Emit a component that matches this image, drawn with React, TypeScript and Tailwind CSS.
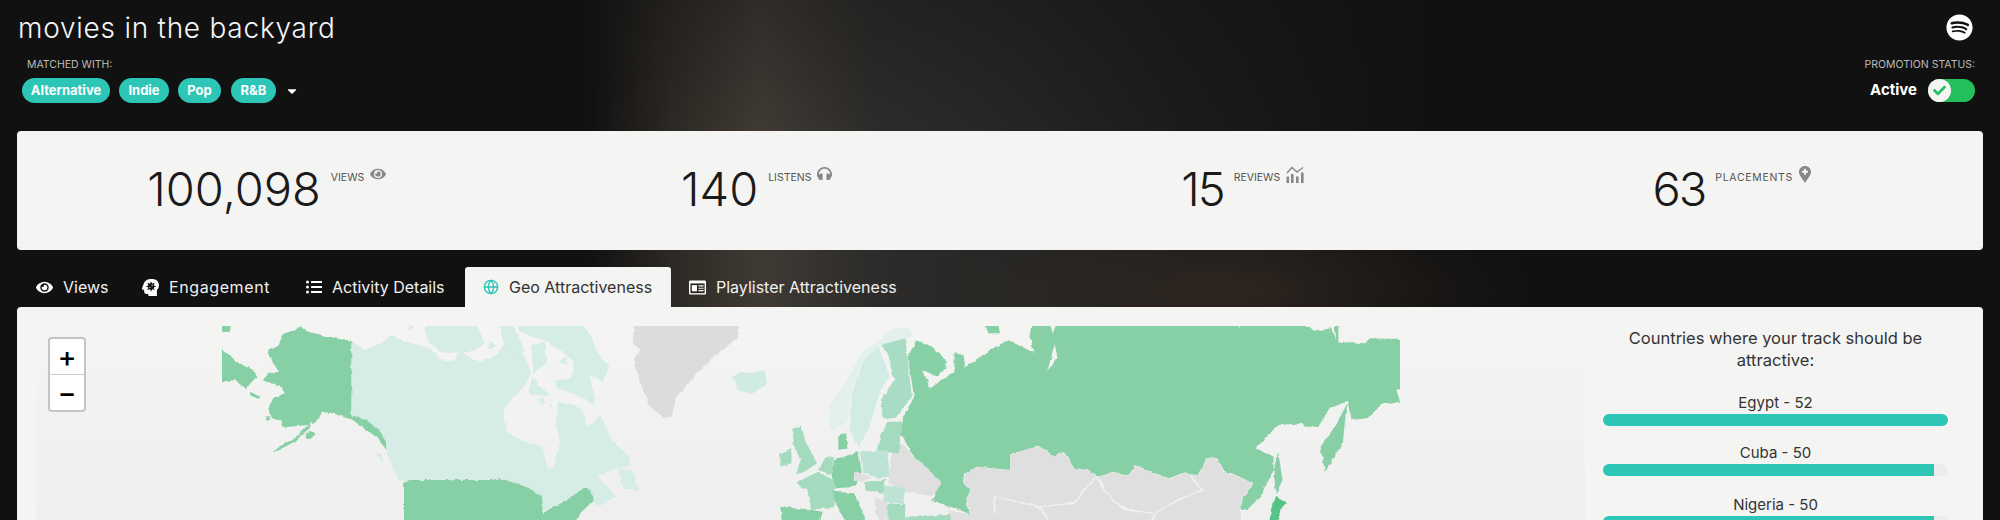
import React from "react";
import { FaEye, FaHeadphones, FaSpotify, FaCheck, FaListUl, FaHeadSideVirus, FaCaretDown } from "react-icons/fa";
import { Globe } from "lucide-react";

const font = { fontFamily: "Inter, 'Open Sans', sans-serif" };

function ReviewIcon() {
  return (
    <svg viewBox="0 0 18 17" className="w-[18px] h-[17px]" fill="#888">
      <rect x="0.5" y="10.5" width="2.6" height="6.5" />
      <rect x="5" y="8" width="2.6" height="9" />
      <rect x="10" y="10.5" width="2.6" height="6.5" />
      <rect x="15" y="6.5" width="2.6" height="10.5" />
      <path d="M1 7 L6 1.5 L11 6 L17 1.5" fill="none" stroke="#888" strokeWidth="1.4" />
    </svg>
  );
}

function PinIcon() {
  return (
    <svg viewBox="0 0 12 17" className="w-[12px] h-[17px]">
      <path d="M6 0 C2.6 0 0 2.6 0 5.9 C0 9.5 3.6 12.5 6 17 C8.4 12.5 12 9.5 12 5.9 C12 2.6 9.4 0 6 0 Z" fill="#888" />
      <path d="M6 2.8 V8.8 M3 5.8 H9" stroke="#f4f4f2" strokeWidth="1.9" />
    </svg>
  );
}

function CardIcon() {
  return (
    <svg viewBox="0 0 18 15" className="w-[17px] h-[15px]">
      <rect x="0" y="0" width="18" height="15" rx="1.5" fill="#fff" />
      <rect x="1.5" y="3.2" width="15" height="10.3" fill="#2a2622" />
      <rect x="3" y="5" width="5.5" height="6.5" fill="#fff" />
      <path d="M10 5.8 H15.5 M10 8.3 H15.5 M10 10.8 H15.5" stroke="#fff" strokeWidth="1.2" />
    </svg>
  );
}

function Stat({ value, label, icon, c, n = "", l = "", i = "ml-[6px]" }: { value: string; label: string; icon: React.ReactNode; c: string; n?: string; l?: string; i?: string }) {
  return (
    <div className={`flex justify-center items-start pt-[28px] ${c}`}>
      <span className={`text-[47px] leading-[60px] font-light text-[#1a1a1a] ${n}`}>{value}</span>
      <span className={`text-[10.5px] leading-[14px] text-[#555] ml-[10px] mt-[12px] ${l}`}>{label}</span>
      <span className={`mt-[7px] text-[#888] ${i}`}>{icon}</span>
    </div>
  );
}

const tabs = [
  { name: "Views", icon: <FaEye size={17} />, w: "w-[107px] pl-[19px]" },
  { name: "Engagement", icon: <FaHeadSideVirus size={17} className="-scale-x-100" />, w: "w-[164px] pl-[18px] tracking-[0.6px]" },
  { name: "Activity Details", icon: <FaListUl size={16} />, w: "w-[177px] pl-[18px]" },
  { name: "Geo Attractiveness", icon: <Globe size={16} strokeWidth={2} />, w: "w-[206px] pl-[18px]", active: true },
  { name: "Playlister Attractiveness", icon: <CardIcon />, w: "w-[246px] pl-[18px]" },
];

function Bar({ label, pct, m }: { label: string; pct: string; m: string }) {
  return (
    <div className={m}>
      <div className="text-[15px] leading-[22px] text-center text-[#333]">{label}</div>
      <div className="h-[12px] rounded-full bg-[#ececec] overflow-hidden">
        <div className={`h-full bg-[#2dc5b6] ${pct}`} />
      </div>
    </div>
  );
}

const G1 = "#87d0a5";
const G2 = "#a4dabd";
const G3 = "#bce3d3";
const L1 = "#d6ece6";
const GR = "#dfdfdf";

function WorldMap() {
  return (
    <svg viewBox="0 0 1178 194" className="w-[1178px] h-[194px] block" preserveAspectRatio="none">
      <defs>
        <filter id="coast" x="-2%" y="-5%" width="104%" height="110%">
          <feTurbulence type="fractalNoise" baseFrequency="0.18" numOctaves="2" seed="4" />
          <feDisplacementMap in="SourceGraphic" scale="3.5" xChannelSelector="R" yChannelSelector="G" />
        </filter>
      </defs>
      <g transform="translate(-222,-326)" filter="url(#coast)" strokeLinejoin="round">
        <g transform="translate(0,300) scale(0.4464,0.3333)">
          <path fill={L1} d="M787,125 L820,150 L850,130 L880,105 L905,125 L940,135 L975,155 L985,180 L1015,185 L1030,155 L1075,185 L1110,165 L1130,130 L1160,140 L1175,170 L1190,215 L1180,250 L1155,285 L1130,320 L1128,355 L1135,395 L1165,420 L1215,440 L1222,480 L1228,505 L1240,505 L1245,470 L1255,425 L1245,370 L1250,305 L1285,315 L1305,330 L1315,385 L1345,345 L1370,420 L1410,470 L1412,495 L1360,515 L1320,545 L1300,570 L1270,600 L1215,635 L1215,590 L1180,560 L1120,535 L1100,540 L915,540 L880,510 L865,450 L865,425 L845,385 L820,360 L787,345 Z" />
          <path fill={L1} d="M1165,50 L1295,50 L1325,110 L1335,150 L1365,200 L1350,245 L1320,225 L1335,315 L1290,285 L1250,265 L1245,240 L1280,235 L1285,180 L1225,125 L1165,95 Z M950,85 L985,50 L1060,50 L1085,130 L1050,160 L985,155 L960,125 Z M910,50 L935,50 L920,95 Z M1115,50 L1140,50 L1175,150 L1160,170 L1125,120 Z M1190,135 L1220,125 L1225,190 L1195,220 Z M1190,230 L1230,285 L1185,285 Z M1205,295 L1220,295 L1215,315 Z M1232,310 L1240,318 L1232,322 Z M1385,505 L1415,510 L1433,575 L1395,565 Z M1310,550 L1340,530 L1380,590 L1335,620 L1330,590 Z M842,458 L855,460 L858,490 Z M880,515 L905,525 L918,550 L895,535 Z M1095,120 L1115,140 L1095,150 Z M1250,185 L1270,170 L1268,195 Z" />
          <path fill={G1} d="M675,78 L690,95 L720,105 L787,125 L787,345 L820,360 L845,385 L865,425 L865,450 L845,410 L815,385 L790,360 L745,340 L720,335 L705,372 L695,365 L693,385 L660,425 L612,458 L625,440 L660,415 L690,375 L650,380 L630,380 L632,362 L610,355 L600,325 L612,295 L638,280 L630,262 L590,240 L600,222 L625,215 L612,190 L598,150 L625,135 L632,102 L660,90 Z M470,130 L500,150 L540,195 L560,200 L577,228 L550,265 L525,240 L470,250 Z M560,275 L583,290 L580,297 L560,285 Z M592,350 L605,348 L607,360 L598,362 Z M682,403 L695,392 L707,402 L695,417 L685,415 Z M470,50 L520,50 L515,95 L470,98 Z" />
          <path fill={G1} d="M905,548 L915,540 L1100,540 L1120,535 L1180,560 L1215,590 L1215,640 L1270,600 L1310,562 L1325,570 L1330,600 L1300,640 L1280,700 L905,700 Z" />
          <path fill="#dcdcdc" d="M1420,50 L1658,50 L1653,115 L1608,160 L1568,210 L1530,270 L1515,290 L1505,350 L1490,355 L1455,320 L1430,230 L1420,180 L1435,150 L1418,130 Z" />
        </g>
        <g transform="translate(700,300) scale(0.4464,0.3333)">
          <path fill="#d0ebe3" d="M72,230 L90,215 L115,220 L145,210 L150,250 L115,282 L85,270 Z" />
          <path fill="#e2f1ed" d="M430,85 L470,85 L478,105 L440,125 L400,140 L360,200 L340,270 L330,365 L300,390 L290,380 L288,320 L330,240 L355,170 L400,120 Z" />
          <path fill="#d2ece5" d="M400,140 L415,190 L425,230 L405,270 L385,350 L380,380 L355,440 L335,395 L340,280 L370,170 Z" />
          <path fill="#a8dcc4" d="M405,135 L460,115 L465,180 L475,290 L440,350 L410,355 L405,300 L435,240 L420,160 Z" />
          <path fill={GR} stroke="#f2f2f2" strokeWidth="3" d="M595,520 L620,500 L695,510 L695,462 L760,438 L795,470 L815,455 L840,505 L870,510 L890,530 L925,515 L960,525 L975,495 L1020,520 L1050,535 L1080,520 L1115,525 L1135,475 L1155,470 L1180,520 L1200,525 L1240,550 L1215,600 L1212,700 L555,700 L555,630 L605,640 L595,610 L605,570 L590,550 Z" />
          <path fill="none" stroke="#f2f2f2" strokeWidth="4" d="M890,530 L900,560 L925,600 L955,630 L1020,640 L1070,600 L1125,570 L1100,530 M890,530 L860,570 L840,610 L760,620 L660,590 L660,640 M760,620 L790,680 M1020,640 L1010,680" />
          <path fill={GR} stroke="#f2f2f2" strokeWidth="3" d="M455,430 L480,470 L505,500 L545,535 L535,570 L520,590 L470,580 L420,550 L425,500 L430,440 Z" />
          <path fill={G1} d="M805,50 L1620,50 L1620,250 L1560,270 L1568,305 L1530,310 L1495,355 L1460,360 L1450,305 L1410,325 L1385,380 L1355,380 L1350,370 L1295,375 L1245,445 L1285,470 L1285,510 L1255,590 L1225,630 L1212,625 L1215,600 L1240,550 L1200,525 L1180,520 L1155,470 L1135,475 L1115,525 L1080,520 L1050,535 L1020,520 L975,495 L960,525 L925,515 L890,530 L870,510 L840,505 L815,455 L795,470 L760,438 L695,462 L695,510 L620,500 L595,520 L590,550 L605,570 L595,610 L605,642 L520,600 L540,545 L505,500 L480,470 L450,400 L455,350 L480,290 L465,170 L485,120 L520,140 L550,180 L550,205 L530,230 L500,210 L515,265 L570,215 L570,160 L590,165 L595,200 L650,150 L690,120 L750,160 L738,110 L745,50 L780,50 L795,130 L778,215 L800,170 L790,100 Z" />
          <path fill="#f3f3f2" d="M1200,50 L1215,50 L1210,90 Z M1290,50 L1420,50 L1425,120 L1415,85 L1375,92 L1365,80 Z M1430,50 L1620,50 L1620,118 L1500,115 L1490,130 L1430,125 Z" />
          <path fill={G1} d="M635,50 L665,50 L672,100 L645,100 Z M1450,310 L1445,360 L1440,430 L1400,515 L1390,440 L1425,375 Z M1295,455 L1305,540 L1290,585 L1285,510 Z" />
          <path fill="#57c388" d="M1290,590 L1315,610 L1300,630 L1290,700 L1272,700 L1280,620 Z" />
          <path fill={G2} d="M210,385 L228,380 L235,420 L262,490 L240,510 L215,525 L225,480 L207,430 Z M180,460 L205,445 L205,490 L180,500 Z M265,515 L305,545 L300,620 L250,630 L240,570 L215,548 Z M420,365 L455,365 L450,400 L445,460 L395,458 L405,400 Z M280,475 L300,470 L295,525 L265,510 Z" />
          <path fill={G3} d="M358,455 L420,450 L425,530 L395,535 L365,515 Z M410,555 L460,565 L455,610 L410,610 Z" />
          <path fill={G1} d="M300,480 L355,455 L362,515 L348,560 L305,565 L295,530 Z M310,405 L328,400 L330,445 L310,450 Z M180,620 L240,628 L275,635 L260,700 L185,700 Z M300,575 L345,580 L385,700 L340,700 L300,600 Z" />
          <path fill={G2} d="M370,545 L415,540 L410,580 L370,570 Z M420,612 L460,612 L458,700 L420,700 Z M460,650 L560,645 L570,700 L460,700 Z" />
          <path fill={GR} d="M345,515 L385,530 L365,545 L345,540 Z M390,590 L420,610 L415,700 L395,640 Z" />
        </g>
      </g>
    </svg>
  );
}

export default function App() {
  return (
    <div
      style={font}
      className="w-full h-[520px] overflow-hidden bg-[#111111] bg-[linear-gradient(180deg,rgba(17,17,17,0.35)_0px,rgba(17,17,17,0)_130px),radial-gradient(ellipse_300px_90px_at_1230px_290px,rgba(70,52,40,0.45)_0%,rgba(17,17,17,0)_100%),linear-gradient(90deg,#111111_0px,#111111_590px,#2c2823_670px,#403a34_760px,#2d2c2a_870px,#262625_1000px,#1b1b1b_1180px,#111111_1420px)]"
    >
      <header className="h-[131px] px-[18px] flex flex-col">
        <div className="flex justify-between items-start">
          <h1 className="text-[28px] leading-[34px] mt-[11px] text-[#f5f5f5] font-light tracking-[0.75px]">movies in the backyard</h1>
          <FaSpotify size={27} className="text-white mt-[14px] mr-[9px]" />
        </div>
        <div className="flex justify-between items-start mt-[13px]">
          <div>
            <div className="ml-[9px] text-[10.5px] leading-[14px] text-[#bbbbbb]">MATCHED WITH:</div>
            <div className="flex items-center mt-[6px] ml-[4px]">
              {[["Alternative", "w-[88px] mr-[9px]"], ["Indie", "w-[50px] mr-[9px]"], ["Pop", "w-[43px] mr-[10px]"], ["R&B", "w-[45px]"]].map(([t, c]) => (
                <span key={t} className={`h-[25px] rounded-full bg-[#2dc5b6] text-white font-bold text-[13px] flex items-center justify-center ${c}`}>{t}</span>
              ))}
              <FaCaretDown size={14} className="text-white ml-[9px]" />
            </div>
          </div>
          <div className="flex flex-col items-end mr-[7px]">
            <div className="text-[10.5px] leading-[14px] text-[#bbbbbb]">PROMOTION STATUS:</div>
            <div className="flex items-center mt-[7px]">
              <span className="text-white font-bold text-[15px] mr-[11px]">Active</span>
              <span className="w-[47px] h-[23px] rounded-full bg-[#22bf5b] flex items-center">
                <span className="w-[23px] h-[23px] rounded-full bg-[#f4f4f2] flex items-center justify-center">
                  <FaCheck size={13} className="text-[#22bf5b]" />
                </span>
              </span>
            </div>
          </div>
        </div>
      </header>

      <section className="mx-[17px] h-[119px] rounded-[4px] bg-[#f4f4f2] grid grid-cols-4">
        <Stat value="100,098" label="VIEWS" icon={<FaEye size={16} />} c="pl-[8px]" />
        <Stat value="140" label="LISTENS" icon={<FaHeadphones size={15} />} c="pl-[5px]" />
        <Stat value="15" label="REVIEWS" icon={<ReviewIcon />} c="pr-[6px]" n="tracking-[-2px]" />
        <Stat value="63" label="PLACEMENTS" icon={<PinIcon />} c="pr-[11px]" n="tracking-[-2px]" l="tracking-[0.7px]" />
      </section>

      <nav className="flex ml-[17px] mt-[17px] h-[40px]">
        {tabs.map((t) => (
          <div
            key={t.name}
            className={`${t.w} flex items-center gap-[10px] text-[16px] rounded-t-[3px] whitespace-nowrap ${t.active ? "bg-[#f4f4f2] text-[#333]" : "text-[#f0f0f0]"}`}
          >
            <span className={t.active ? "text-[#2dc5b6]" : "text-white"}>{t.icon}</span>
            {t.name}
          </div>
        ))}
      </nav>

      <section className="mx-[17px] h-[230px] rounded-t-[4px] bg-[#f4f4f2] flex pt-[19px]">
        <div className="relative w-[1549px] h-[194px] ml-[19px] bg-linear-to-b from-[#f4f4f3] to-[#efefef] shrink-0">
          <div className="ml-[186px]"><WorldMap /></div>
          <div className="absolute left-[12px] top-[11px] w-[38px] rounded-[4px] border-2 border-[#c4c4c4] bg-white text-black overflow-hidden">
            <div className="h-[36px] flex items-center justify-center text-[28px] leading-none font-medium border-b border-[#ccc]">+</div>
            <div className="h-[35px] flex items-center justify-center text-[28px] leading-none font-medium">−</div>
          </div>
        </div>
        <aside className="ml-[18px] w-[345px] shrink-0 mt-[1px]">
          <p className="text-[16.5px] leading-[22px] text-center text-[#333]">Countries where your track should be attractive:</p>
          <div className="mt-[21px]">
            <Bar label="Egypt - 52" pct="w-full" m="mb-[16px]" />
            <Bar label="Cuba - 50" pct="w-[96%]" m="mb-[18px]" />
            <Bar label="Nigeria - 50" pct="w-[96%]" m="" />
          </div>
        </aside>
      </section>
    </div>
  );
}
